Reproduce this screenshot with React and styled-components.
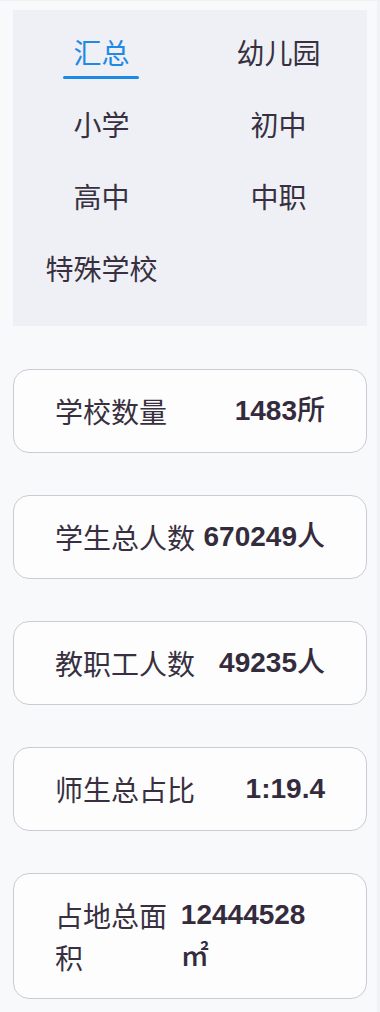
import React from "react";
import styled, { createGlobalStyle } from "styled-components";

const Global = createGlobalStyle`
  html, body { margin: 0; padding: 0; }
  body {
    background: #f8f9fb;
    font-family: "Noto Sans CJK SC", "Noto Sans", sans-serif;
    color: #383040;
  }
`;

const Page = styled.div`
  box-sizing: border-box;
  width: 380px;
  min-height: 1012px;
  padding: 9px 13px 0;
  border-top: 1px solid #eef0f4;
  box-shadow: inset -3px 0 0 #f0f2f5;
`;

const TabPanel = styled.div`
  background: #eef0f5;
  display: grid;
  grid-template-columns: 1fr 1fr;
  grid-auto-rows: 72px;
  padding: 6px 0 22px;
`;

const Tab = styled.div`
  display: flex;
  align-items: center;
  justify-content: center;
  font-size: 28px;
  line-height: 42px;
`;

const TabLabel = styled.span`
  position: relative;
  color: ${(p) => (p.$active ? "#1e8ae6" : "#383040")};
  &::after {
    content: "";
    display: ${(p) => (p.$active ? "block" : "none")};
    position: absolute;
    left: 50%;
    bottom: -6px;
    width: 76px;
    height: 3px;
    border-radius: 2px;
    transform: translateX(-50%);
    background: #1e8ae6;
  }
`;

const Cards = styled.div`
  display: flex;
  flex-direction: column;
  gap: 42px;
  margin-top: 43px;
`;

const Card = styled.div`
  box-sizing: border-box;
  display: flex;
  justify-content: space-between;
  align-items: center;
  padding: 20px 41px;
  background: #fdfdfe;
  border: 1px solid #c9ccd3;
  border-radius: 16px;
  font-size: 28px;
  line-height: 42px;
`;

const Label = styled.div`
  font-weight: 400;
`;

const Value = styled.div`
  font-family: "Liberation Sans", "Noto Sans CJK SC", sans-serif;
  font-weight: 700;
  color: #342c3c;
`;

const Unit = styled.span`
  font-family: "Noto Sans CJK SC", sans-serif;
  font-weight: 500;
  line-height: 0;
`;

const tabs = ["汇总", "幼儿园", "小学", "初中", "高中", "中职", "特殊学校"];

const stats = [
  ["学校数量", "1483", "所"],
  ["学生总人数", "670249", "人"],
  ["教职工人数", "49235", "人"],
  ["师生总占比", "1:19.4", ""],
  ["占地总面积", "12444528 ", "㎡"],
];

export default function App() {
  return (
    <>
      <Global />
      <Page>
        <TabPanel>
          {tabs.map((t, i) => (
            <Tab key={t}>
              <TabLabel $active={i === 0}>{t}</TabLabel>
            </Tab>
          ))}
        </TabPanel>
        <Cards>
          {stats.map(([l, v, u]) => (
            <Card key={l}>
              <Label>{l}</Label>
              <Value>
                {v}
                {u && <Unit>{u}</Unit>}
              </Value>
            </Card>
          ))}
        </Cards>
      </Page>
    </>
  );
}
